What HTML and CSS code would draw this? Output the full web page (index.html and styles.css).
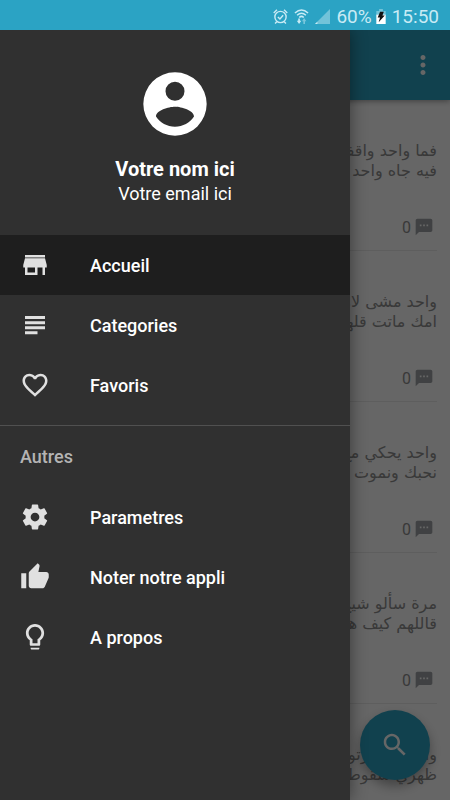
FILE: index.html
```html
<!DOCTYPE html>
<html lang="fr">
<head>
<meta charset="utf-8">
<meta name="viewport" content="width=device-width, initial-scale=1">
<title>Accueil</title>
<link rel="stylesheet" href="styles.css">
</head>
<body>
<svg class="sprite" aria-hidden="true">
  <symbol id="comment" viewBox="0 0 24 24"><path d="M20 2H4c-1.100 0-1.990.9-1.990 2L2 22l4-4h14c1.100 0 2-.9 2-2V4c0-1.100-.9-2-2-2zM9 11H7V9h2v2zm4 0h-2V9h2v2zm4 0h-2V9h2v2z"/></symbol>
</svg>
<div class="status">
  <svg class="status-icon" viewBox="0 0 16 16"><g fill="none" stroke="currentColor" stroke-width="1.500"><circle cx="8" cy="8.500" r="6"/><path d="M5.200 8.500l2.200 2.200 3.400-4M.8 4.200l3.400-3.400M15.200 4.200l-3.400-3.400M4 13.500l-1.800 2M12 13.500l1.800 2"/></g></svg>
  <svg class="status-icon" viewBox="0 0 16 16"><g fill="none" stroke="currentColor" stroke-width="1.600"><path d="M1 4.200Q8-2.200 15 4.200M3.300 6.600Q8 2.400 12.700 6.600M5.600 9Q8 6.800 10.400 9"/></g><path fill="currentColor" d="M4.500 10h1.800v2.500h1.500L5.400 16 3 12.500h1.500z"/><path fill="currentColor" opacity=".5" d="M10 16h1.700v-3h1.500l-2.400-3.300L8.500 13H10z"/></svg>
  <svg class="status-icon" viewBox="0 0 16 16"><path fill="currentColor" opacity=".45" d="M16 0v16H0z"/><path fill="currentColor" d="M2.500 13.500V16H0z"/></svg>
  <span>60%</span>
  <svg class="battery" viewBox="0 0 10 16"><path fill="currentColor" opacity=".45" d="M3 0h4v2h3v4H0V2h3z"/><path fill="#fff" d="M0 6h10v10H0z"/><path fill="#111" d="M4 3h4L6.500 7H9l-6.500 7L4 9H1.500z"/></svg>
  <span>15:50</span>
</div>
<div class="screen">
  <div class="page">
    <header class="appbar">
      <button class="more" aria-label="Plus d'options"><svg viewBox="0 0 24 24"><path d="M12 8c1.100 0 2-.9 2-2s-.9-2-2-2-2 .9-2 2 .9 2 2 2zm0 2c-1.100 0-2 .9-2 2s.9 2 2 2 2-.9 2-2-.9-2-2-2zm0 6c-1.100 0-2 .9-2 2s.9 2 2 2 2-.9 2-2-.9-2-2-2z"/></svg></button>
    </header>
    <main class="feed" lang="ar" dir="rtl">
      <article class="post"><p>فما واحد واقفين<br>فيه جاه واحد</p><div class="count"><svg><use href="#comment"/></svg><span>0</span></div></article>
      <article class="post"><p>واحد مشى لامو<br>امك ماتت قلهم</p><div class="count"><svg><use href="#comment"/></svg><span>0</span></div></article>
      <article class="post"><p>واحد يحكي مع<br>نحبك ونموت ع</p><div class="count"><svg><use href="#comment"/></svg><span>0</span></div></article>
      <article class="post"><p>مرة سألو شيخ<br>قاللهم كيف هيا</p><div class="count"><svg><use href="#comment"/></svg><span>0</span></div></article>
      <article class="post"><p>واحد سا مرتو<br>ظهري سقوط</p></article>
    </main>
    <button class="fab" aria-label="Rechercher"><svg viewBox="0 0 24 24"><path d="M15.500 14h-.79l-.28-.27C15.410 12.590 16 11.110 16 9.500 16 5.910 13.090 3 9.500 3S3 5.910 3 9.500 5.910 16 9.500 16c1.610 0 3.090-.59 4.230-1.570l.27.28v.79l5 4.990L20.490 19l-4.990-5zm-6 0C7.010 14 5 11.990 5 9.500S7.010 5 9.500 5 14 7.010 14 9.500 11.990 14 9.500 14z"/></svg></button>
  </div>
  <div class="scrim"></div>
  <aside class="drawer">
    <div class="profile">
      <svg class="avatar" viewBox="0 0 24 24"><path fill-rule="evenodd" d="M12 2a10 10 0 1 0 0 20 10 10 0 0 0 0-20zm0 3a3 3 0 1 1 0 6 3 3 0 0 1 0-6zm0 14.200c-2.500 0-4.710-1.280-6-3.220.03-1.990 4-3.080 6-3.080 1.990 0 5.970 1.090 6 3.080-1.290 1.940-3.500 3.220-6 3.220z"/></svg>
      <strong class="name">Votre nom ici</strong>
      <span class="email">Votre email ici</span>
    </div>
    <nav>
      <div class="group">
        <a class="item active" href="#accueil"><svg viewBox="0 0 24 24"><path d="M20 4H4v2h16V4zm1.400 10v-2L20 6.600H4L2.600 12v2H4v6h10v-6h4v6h2v-6h1.400zM12 18H6v-4h6v4z"/></svg>Accueil</a>
        <a class="item" href="#categories"><svg viewBox="0 0 24 24"><path d="M4 4.800h16v2.400H4zM4 8.900h16v2.400H4zM4 13h16v2.400H4zM4 17h10v2.400H4z"/></svg>Categories</a>
        <a class="item" href="#favoris"><svg viewBox="0 0 24 24"><path d="M16.500 3c-1.740 0-3.410.81-4.500 2.090C10.910 3.810 9.240 3 7.500 3 4.420 3 2 5.420 2 8.500c0 3.780 3.400 6.860 8.550 11.540L12 21.350l1.450-1.320C18.600 15.360 22 12.280 22 8.500 22 5.420 19.580 3 16.500 3zm-4.400 15.550l-.1.100-.1-.1C7.140 14.240 4 11.390 4 8.500 4 6.500 5.500 5 7.500 5c1.540 0 3.040.99 3.570 2.360h1.870C13.460 5.990 14.960 5 16.500 5c2 0 3.500 1.500 3.500 3.500 0 2.890-3.140 5.740-7.900 10.050z"/></svg>Favoris</a>
      </div>
      <h2 class="section">Autres</h2>
      <a class="item" href="#parametres"><svg viewBox="0 0 24 24"><path d="M19.430 12.980c.04-.32.07-.64.07-.98s-.03-.66-.07-.98l2.110-1.650c.19-.15.24-.42.12-.64l-2-3.460c-.12-.22-.39-.3-.61-.22l-2.490 1c-.52-.4-1.080-.73-1.690-.98l-.38-2.650C14.460 2.180 14.250 2 14 2h-4c-.25 0-.46.18-.49.42l-.38 2.650c-.61.25-1.170.59-1.690.98l-2.490-1c-.23-.09-.49 0-.61.22l-2 3.460c-.13.22-.07.49.12.64l2.110 1.650c-.04.32-.07.65-.07.98s.03.66.07.98l-2.110 1.650c-.19.15-.24.42-.12.64l2 3.460c.12.22.39.3.61.22l2.490-1c.52.4 1.080.73 1.690.98l.38 2.650c.03.24.24.42.49.42h4c.25 0 .46-.18.49-.42l.38-2.650c.61-.25 1.170-.59 1.690-.98l2.490 1c.23.09.49 0 .61-.22l2-3.460c.12-.22.07-.49-.12-.64l-2.110-1.650zM12 15.500c-1.930 0-3.500-1.570-3.500-3.500s1.570-3.500 3.500-3.500 3.500 1.570 3.500 3.500-1.570 3.500-3.500 3.500z"/></svg>Parametres</a>
      <a class="item" href="#noter"><svg viewBox="0 0 24 24"><path d="M1 21h4V9H1v12zm22-11c0-1.100-.9-2-2-2h-6.310l.95-4.570.03-.32c0-.41-.17-.79-.44-1.060L14.170 1 7.590 7.590C7.220 7.950 7 8.450 7 9v10c0 1.100.9 2 2 2h9c.83 0 1.540-.5 1.840-1.220l3.020-7.050c.09-.23.14-.47.14-.73v-2z"/></svg>Noter notre appli</a>
      <a class="item" href="#apropos"><svg viewBox="0 0 24 24"><path d="M8.500 20.500v.5c0 .55.450 1 1 1h5c.55 0 1-.45 1-1v-.5zM12 1.500C8 1.500 4.700 4.700 4.700 8.700c0 2.400 1.200 4.600 3.100 5.900V18c0 .55.450 1 1 1h6.400c.55 0 1-.45 1-1v-3.400c1.900-1.300 3.100-3.500 3.100-5.900 0-4-3.300-7.200-7.300-7.200zm2.850 11.600l-.85.6V17h-4v-3.300l-.85-.6C7.800 12.160 6.900 10.500 6.900 8.800c0-2.800 2.300-5.100 5.100-5.100s5.100 2.300 5.100 5.100c0 1.700-.9 3.360-2.250 4.300z"/></svg>A propos</a>
    </nav>
  </aside>
</div>
</body>
</html>
```
FILE: styles.css
```css
* { box-sizing: border-box; }
body {
  margin: 0;
  height: 100vh;
  display: flex;
  flex-direction: column;
  overflow: hidden;
  background: #fff;
  font-family: Roboto, "Liberation Sans", sans-serif;
}
svg { fill: currentColor; flex: none; }
button { border: 0; padding: 0; cursor: pointer; }
.sprite { position: absolute; width: 0; height: 0; }

.status {
  display: flex;
  align-items: center;
  justify-content: flex-end;
  gap: 6px;
  height: 30px;
  padding: 2px 11px 0 0;
  background: #2ba3c4;
  color: #c9ebf5;
  font-size: 19px;
  flex: none;
}
.status-icon { width: 15px; height: 15px; }
.battery { width: 10px; height: 15px; margin-left: -2px; }

.screen { position: relative; flex: 1; min-height: 0; overflow: hidden; }
.page { height: 100%; overflow: hidden; }
.appbar {
  display: flex;
  align-items: center;
  justify-content: flex-end;
  height: 70px;
  padding-right: 12px;
  background: #2ba3c4;
  box-shadow: 0 1px 6px rgba(0, 0, 0, .4);
}
.more { background: none; color: #fff; }
.more svg { display: block; width: 30px; height: 30px; }

.feed { padding: 0 13px; }
.post {
  display: flex;
  flex-direction: column;
  justify-content: space-between;
  height: 151px;
  padding: 41px 0 13px;
  border-bottom: 1px solid #ebebeb;
  color: #909090;
}
.post p {
  margin: 0;
  font: 16px/20px "DejaVu Sans", sans-serif;
  white-space: nowrap;
}
.count { display: flex; align-items: center; gap: 3px; padding-right: 3px; font-size: 16px; }
.count svg { width: 20px; height: 20px; color: #a0a4a8; }

.fab {
  position: absolute;
  right: 20px;
  bottom: 20px;
  display: grid;
  place-items: center;
  width: 70px;
  height: 70px;
  border-radius: 50%;
  background: #2ba3c4;
  color: #fff;
  box-shadow: 0 6px 12px rgba(0, 0, 0, .35);
}
.fab svg { width: 30px; height: 30px; }

.scrim { position: absolute; inset: 0; background: rgba(0, 0, 0, .6); }
.drawer {
  position: absolute;
  top: 0;
  bottom: 0;
  left: 0;
  width: 350px;
  max-width: 85%;
  overflow-y: auto;
  background: #303030;
  color: #fff;
  box-shadow: 0 0 16px rgba(0, 0, 0, .45);
}
.profile {
  display: flex;
  flex-direction: column;
  align-items: center;
  height: 205px;
  padding-top: 36px;
}
.avatar { width: 76px; height: 76px; margin-bottom: 14px; }
.name { font-size: 20px; line-height: 26px; }
.email { font-size: 18px; line-height: 24px; }
.group { padding-bottom: 10px; border-bottom: 1px solid #505050; }
.item {
  display: flex;
  align-items: center;
  gap: 40px;
  height: 60px;
  padding: 0 20px;
  color: #fff;
  font-size: 18px;
  font-weight: 500;
  text-decoration: none;
}
.item svg { width: 30px; height: 30px; color: #e0e0e0; }
.active { background: #1e1e1e; }
.section {
  margin: 0;
  padding: 0 20px;
  color: #b4b4b4;
  font-size: 18px;
  font-weight: 500;
  line-height: 61px;
}
```
